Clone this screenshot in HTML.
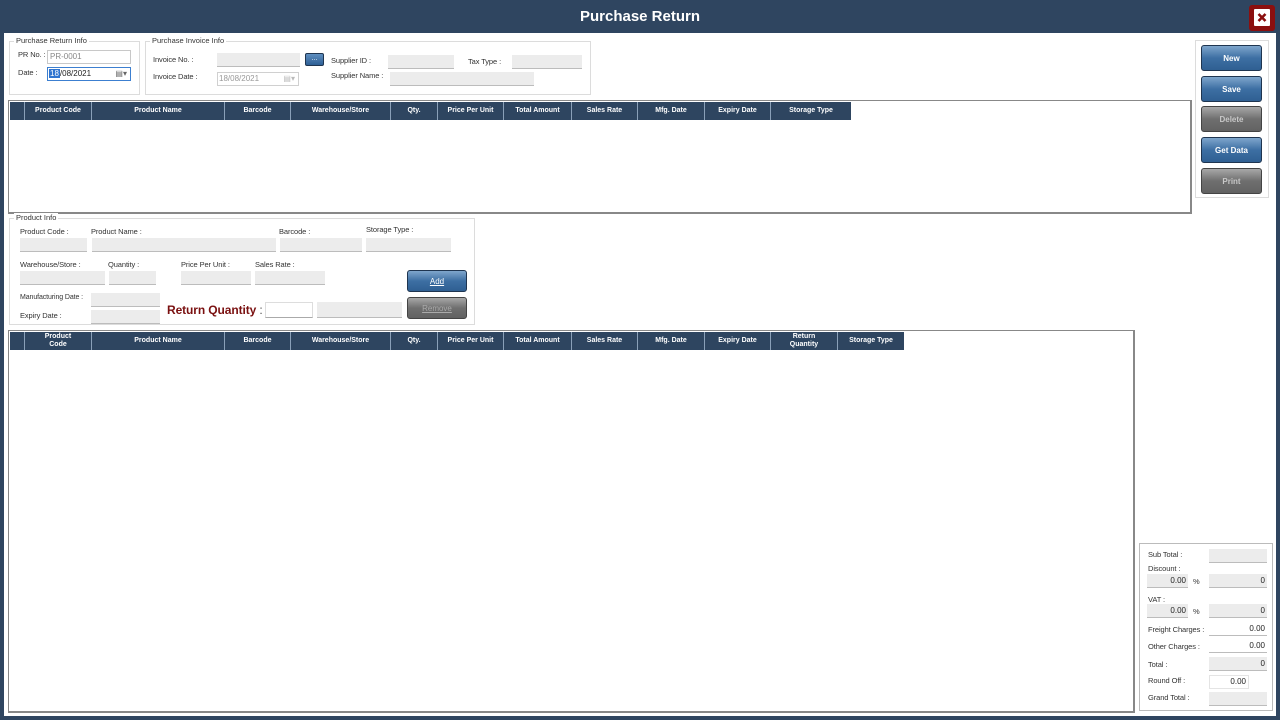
<!DOCTYPE html>
<html><head><meta charset="utf-8"><style>
*{box-sizing:border-box;margin:0;padding:0}
body{width:1280px;height:720px;background:#2f4560;font-family:"Liberation Sans",sans-serif;position:relative;overflow:hidden;font-size:8px;color:#333}
.a{position:absolute}
#main{position:absolute;left:4px;top:33px;width:1272px;height:683px;background:#fff}
.t{position:absolute;left:0;top:0;width:1280px;height:33px;color:#fff;font-size:15px;font-weight:600;text-align:center;line-height:33px}
.gb{position:absolute;border:1px solid #dcdcdc}
.gt{position:absolute;top:-6px;left:4px;background:#fff;padding:0 2px;font-size:7.5px;color:#333}
.f{position:absolute;height:14px;background:#ececec;border-bottom:1px solid #bcbcbc}
.l{position:absolute;font-size:7.5px;letter-spacing:-0.1px;color:#333;white-space:nowrap}
.grid{position:absolute;border:1px solid #7a7a7a;border-width:1px 2px 2px 1px;border-color:#888}
.hd{position:absolute;background:#2e4560;color:#fff;font-size:7px;font-weight:600;text-align:center;display:flex;align-items:center;justify-content:center;border-right:1px solid #8aa0b8;line-height:8px}
.btn{position:absolute;width:61px;height:26px;border-radius:3px;color:#fff;font-size:8px;font-weight:bold;text-align:center;line-height:26px;border:1px solid #1f3550;background:linear-gradient(#7fa6cc,#3d6fa3 50%,#2f5f92)}
.gr{border-color:#444;background:linear-gradient(#a8a8a8,#6f6f6f 50%,#626262);color:#c8c8c8}
.r{text-align:right;padding-right:2px;line-height:14px;font-size:8px;color:#222}
</style></head><body>
<div class="t">Purchase Return</div>
<div class="a" style="left:1249px;top:5px;width:26px;height:26px;background:#8b0f0f;border-radius:3px"></div>
<div class="a" style="left:1254px;top:9px;width:16px;height:17px;background:#fff;border-radius:1px"></div>
<svg class="a" style="left:1254px;top:9px" width="16" height="17"><path d="M4.5 5 L11.5 12 M11.5 5 L4.5 12" stroke="#8b0f0f" stroke-width="2.6"/></svg>
<div id="main"></div>

<div class="gb" style="left:9px;top:41px;width:131px;height:54px"><span class="gt">Purchase Return Info</span></div>
<div class="l" style="left:18px;top:50px">PR No. :</div>
<div class="a" style="left:47px;top:50px;width:84px;height:14px;border:1px solid #c8c8c8;color:#888;font-size:8px;line-height:12px;padding-left:2px">PR-0001</div>
<div class="l" style="left:18px;top:68px">Date :</div>
<div class="a" style="left:47px;top:67px;width:84px;height:14px;border:1px solid #3c7fd0;font-size:8px;line-height:12px;color:#222"><span style="background:#3075d0;color:#fff;padding:0 1px;margin-left:1px">18</span>/08/2021<span style="position:absolute;right:3px;top:0;color:#666">▤▾</span></div>

<div class="gb" style="left:145px;top:41px;width:446px;height:54px"><span class="gt">Purchase Invoice Info</span></div>
<div class="l" style="left:153px;top:55px">Invoice No. :</div>
<div class="f" style="left:217px;top:53px;width:83px"></div>
<div class="a" style="left:305px;top:53px;width:19px;height:13px;background:linear-gradient(#5f8fc0,#2e5f95);border:1px solid #1f3550;border-radius:2px;color:#fff;font-size:7px;text-align:center;line-height:10px">...</div>
<div class="l" style="left:153px;top:72px">Invoice Date :</div>
<div class="a" style="left:217px;top:72px;width:82px;height:14px;border:1px solid #d0d0d0;color:#999;font-size:8px;line-height:12px;padding-left:1px">18/08/2021<span style="position:absolute;right:3px;color:#bbb">▤▾</span></div>
<div class="l" style="left:331px;top:56px">Supplier ID :</div>
<div class="f" style="left:388px;top:55px;width:66px"></div>
<div class="l" style="left:468px;top:57px">Tax Type :</div>
<div class="f" style="left:512px;top:55px;width:70px"></div>
<div class="l" style="left:331px;top:71px">Supplier Name :</div>
<div class="f" style="left:390px;top:72px;width:144px"></div>

<div class="grid" style="left:8px;top:100px;width:1184px;height:114px"></div>
<div class="hd" style="left:10px;top:102px;width:15px;height:18px"></div>
<div class="hd" style="left:25px;top:102px;width:67px;height:18px">Product Code</div>
<div class="hd" style="left:92px;top:102px;width:133px;height:18px">Product Name</div>
<div class="hd" style="left:225px;top:102px;width:66px;height:18px">Barcode</div>
<div class="hd" style="left:291px;top:102px;width:100px;height:18px">Warehouse/Store</div>
<div class="hd" style="left:391px;top:102px;width:47px;height:18px">Qty.</div>
<div class="hd" style="left:438px;top:102px;width:66px;height:18px">Price Per Unit</div>
<div class="hd" style="left:504px;top:102px;width:68px;height:18px">Total Amount</div>
<div class="hd" style="left:572px;top:102px;width:66px;height:18px">Sales Rate</div>
<div class="hd" style="left:638px;top:102px;width:67px;height:18px">Mfg. Date</div>
<div class="hd" style="left:705px;top:102px;width:66px;height:18px">Expiry Date</div>
<div class="hd" style="left:771px;top:102px;width:80px;height:18px;border-right:none">Storage Type</div>

<div class="gb" style="left:1195px;top:40px;width:74px;height:158px"></div>
<div class="btn" style="left:1201px;top:45px">New</div>
<div class="btn" style="left:1201px;top:76px">Save</div>
<div class="btn gr" style="left:1201px;top:106px">Delete</div>
<div class="btn" style="left:1201px;top:137px">Get Data</div>
<div class="btn gr" style="left:1201px;top:168px">Print</div>

<div class="gb" style="left:9px;top:218px;width:466px;height:107px"><span class="gt">Product Info</span></div>
<div class="l" style="left:20px;top:227px">Product Code :</div>
<div class="f" style="left:20px;top:238px;width:67px"></div>
<div class="l" style="left:91px;top:227px">Product Name :</div>
<div class="f" style="left:92px;top:238px;width:184px"></div>
<div class="l" style="left:279px;top:227px">Barcode :</div>
<div class="f" style="left:280px;top:238px;width:82px"></div>
<div class="l" style="left:366px;top:225px">Storage Type :</div>
<div class="f" style="left:366px;top:238px;width:85px"></div>
<div class="l" style="left:20px;top:260px">Warehouse/Store :</div>
<div class="f" style="left:20px;top:271px;width:85px"></div>
<div class="l" style="left:108px;top:260px">Quantity :</div>
<div class="f" style="left:109px;top:271px;width:47px"></div>
<div class="l" style="left:181px;top:260px">Price Per Unit :</div>
<div class="f" style="left:181px;top:271px;width:70px"></div>
<div class="l" style="left:255px;top:260px">Sales Rate :</div>
<div class="f" style="left:255px;top:271px;width:70px"></div>
<div class="btn" style="left:407px;top:270px;width:60px;height:22px;line-height:21px;font-weight:normal;text-decoration:underline">Add</div>
<div class="btn gr" style="left:407px;top:297px;width:60px;height:22px;line-height:21px;font-weight:normal;color:#aaa;text-decoration:underline">Remove</div>
<div class="l" style="left:20px;top:294px;font-size:7px">Manufacturing Date :</div>
<div class="f" style="left:91px;top:293px;width:69px"></div>
<div class="l" style="left:20px;top:311px">Expiry Date :</div>
<div class="f" style="left:91px;top:310px;width:69px"></div>
<div class="l" style="left:167px;top:303px;font-size:12px;font-weight:bold;color:#7a1010">Return Quantity <span style="color:#555;font-weight:normal">:</span></div>
<div class="a" style="left:265px;top:302px;width:48px;height:16px;border:1px solid #ddd;border-bottom-color:#aaa"></div>
<div class="f" style="left:317px;top:302px;width:85px;height:16px"></div>

<div class="grid" style="left:8px;top:330px;width:1127px;height:383px"></div>
<div class="hd" style="left:10px;top:332px;width:15px;height:18px"></div>
<div class="hd" style="left:25px;top:332px;width:67px;height:18px">Product<br>Code</div>
<div class="hd" style="left:92px;top:332px;width:133px;height:18px">Product Name</div>
<div class="hd" style="left:225px;top:332px;width:66px;height:18px">Barcode</div>
<div class="hd" style="left:291px;top:332px;width:100px;height:18px">Warehouse/Store</div>
<div class="hd" style="left:391px;top:332px;width:47px;height:18px">Qty.</div>
<div class="hd" style="left:438px;top:332px;width:66px;height:18px">Price Per Unit</div>
<div class="hd" style="left:504px;top:332px;width:68px;height:18px">Total Amount</div>
<div class="hd" style="left:572px;top:332px;width:66px;height:18px">Sales Rate</div>
<div class="hd" style="left:638px;top:332px;width:67px;height:18px">Mfg. Date</div>
<div class="hd" style="left:705px;top:332px;width:66px;height:18px">Expiry Date</div>
<div class="hd" style="left:771px;top:332px;width:67px;height:18px">Return<br>Quantity</div>
<div class="hd" style="left:838px;top:332px;width:66px;height:18px;border-right:none">Storage Type</div>

<div class="gb" style="left:1139px;top:543px;width:134px;height:168px;border-color:#bbb"></div>
<div class="l" style="left:1148px;top:550px">Sub Total :</div>
<div class="f" style="left:1209px;top:549px;width:58px"></div>
<div class="l" style="left:1148px;top:564px">Discount :</div>
<div class="f r" style="left:1147px;top:574px;width:41px">0.00</div>
<div class="l" style="left:1193px;top:577px">%</div>
<div class="f r" style="left:1209px;top:574px;width:58px">0</div>
<div class="l" style="left:1148px;top:595px">VAT :</div>
<div class="f r" style="left:1147px;top:604px;width:41px">0.00</div>
<div class="l" style="left:1193px;top:607px">%</div>
<div class="f r" style="left:1209px;top:604px;width:58px">0</div>
<div class="l" style="left:1148px;top:625px">Freight Charges :</div>
<div class="f r" style="left:1209px;top:622px;width:58px;background:#fff">0.00</div>
<div class="l" style="left:1148px;top:642px">Other Charges :</div>
<div class="f r" style="left:1209px;top:639px;width:58px;background:#fff">0.00</div>
<div class="l" style="left:1148px;top:660px">Total :</div>
<div class="f r" style="left:1209px;top:657px;width:58px">0</div>
<div class="l" style="left:1148px;top:676px">Round Off :</div>
<div class="f" style="left:1209px;top:675px;width:40px;background:#fff;border:1px solid #e4e4e4;text-align:right;line-height:12px;padding-right:2px;color:#222">0.00</div>
<div class="l" style="left:1148px;top:693px">Grand Total :</div>
<div class="f" style="left:1209px;top:692px;width:58px"></div>
</body></html>
